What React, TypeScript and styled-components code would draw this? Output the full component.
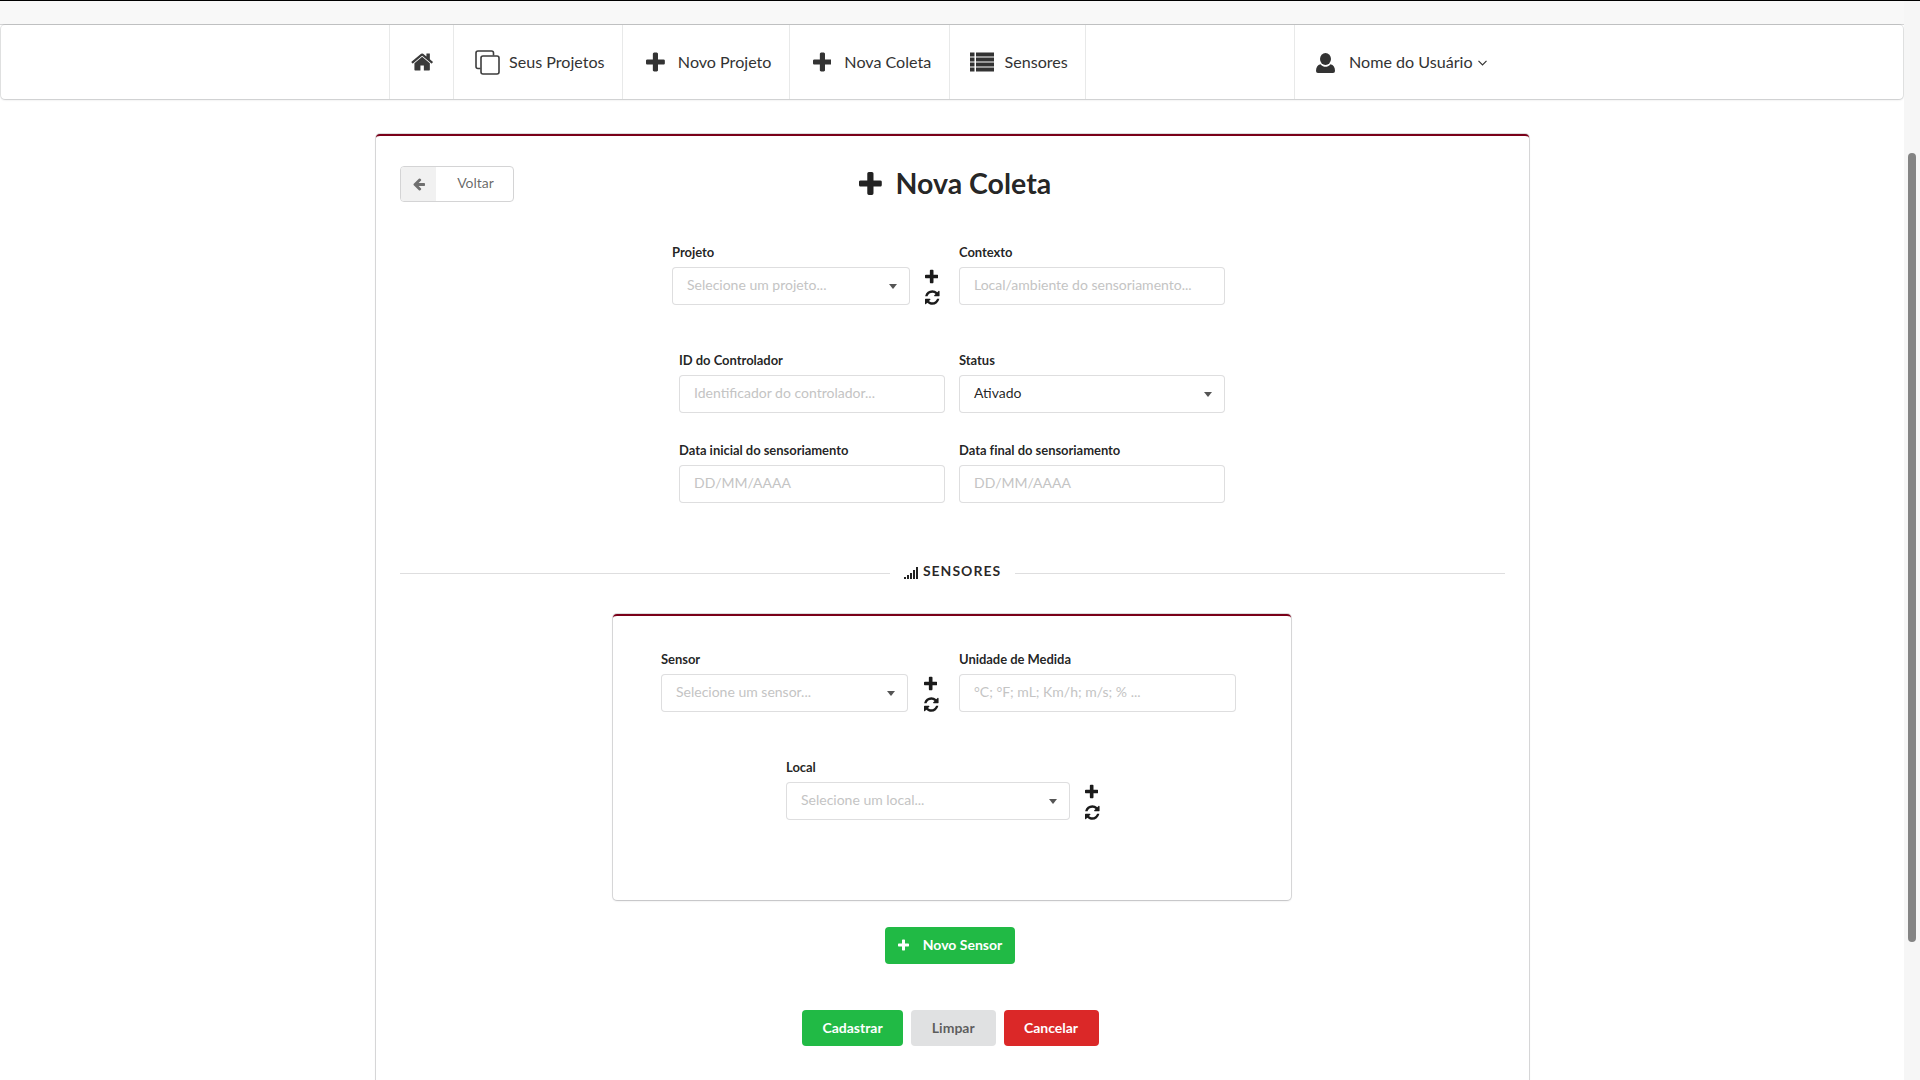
import React from 'react';
import styled, { createGlobalStyle } from 'styled-components';

const Global = createGlobalStyle`
  html, body { margin: 0; padding: 0; height: 100%; background: #fff; overflow: hidden; }
  * { box-sizing: border-box; }
  body { font-family: Lato, "Helvetica Neue", Arial, sans-serif; font-size: 14px; color: rgba(0,0,0,.87); }
`;

const PATHS = {
  plus: { vb: '0 0 1408 1792', d: 'M1408 800v192q0 40-28 68t-68 28h-416v416q0 40-28 68t-68 28h-192q-40 0-68-28t-28-68v-416h-416q-40 0-68-28t-28-68v-192q0-40 28-68t68-28h416v-416q0-40 28-68t68-28h192q40 0 68 28t28 68v416h416q40 0 68 28t28 68z' },
  home: { vb: '0 0 1664 1792', d: 'M1408 992v480q0 26-19 45t-45 19h-384v-384h-256v384h-384q-26 0-45-19t-19-45v-480q0-1 .5-3t.5-3l575-474 575 474q1 2 1 6zM1631 923l-62 74q-8 9-21 11h-3q-13 0-21-7l-692-577-692 577q-12 8-24 7-13-2-21-11l-62-74q-8-10-7-23.500t11-21.500l719-599q32-26 76-26t76 26l244 204v-195q0-14 9-23t23-9h192q14 0 23 9t9 23v408l219 182q10 8 11 21.500t-7 23.500z' },
  sync: { vb: '0 0 1536 1792', d: 'M1511 1056q0 5-1 7-64 268-268 434.500t-478 166.500q-146 0-282.500-55t-243.500-157l-129 129q-19 19-45 19t-45-19-19-45v-448q0-26 19-45t45-19h448q26 0 45 19t19 45-19 45l-137 137q71 66 161 102t187 36q134 0 250-65t186-179q11-17 53-117 8-23 30-23h192q13 0 22.500 9.500t9.500 22.500zM1536 256v448q0 26-19 45t-45 19h-448q-26 0-45-19t-19-45 19-45l138-138q-148-137-349-137-134 0-250 65t-186 179q-11 17-53 117-8 23-30 23h-199q-13 0-22.500-9.500t-9.500-22.500v-7q65-268 270-434.500t480-166.500q146 0 284 55.500t245 156.500l130-129q19-19 45-19t45 19 19 45z' },
  left: { vb: '0 0 1536 1792', d: 'M1536 896v128q0 53-32.500 90.500t-84.500 37.500h-704l293 294q38 36 38 90t-38 90l-75 76q-37 37-90 37-52 0-91-37l-651-652q-37-37-37-90 0-52 37-91l651-650q38-38 91-38 52 0 90 38l75 74q38 38 38 91t-38 91l-293 293h704q52 0 84.500 37.500t32.500 90.500z' },
};

const Icon = ({ name, size, color = 'currentColor' }: { name: keyof typeof PATHS; size: number; color?: string }) => {
  const p = PATHS[name];
  const [, , w, h] = p.vb.split(' ').map(Number);
  return (
    <svg width={(size * w) / h} height={size} viewBox={p.vb} fill={color} style={{ flex: 'none', display: 'block' }}>
      <path d={p.d} />
    </svg>
  );
};

const CopyIcon = () => (
  <svg width="25" height="25" viewBox="0 0 25 25" fill="none" stroke="#3d3d3d" strokeWidth="1.6" style={{ flex: 'none' }}>
    <path d="M5.5 18.5H3a2 2 0 0 1-2-2V3a2 2 0 0 1 2-2h13.500a2 2 0 0 1 2 2v2.500" />
    <rect x="6" y="6" width="18" height="18" rx="2" />
  </svg>
);

const ListIcon = () => (
  <svg width="24" height="20" viewBox="0 0 24 20" fill="#333" style={{ flex: 'none' }}>
    <rect x="0" y="0.500" width="4.500" height="4" /><rect x="6" y="0.500" width="18" height="4" />
    <rect x="0" y="5.500" width="4.500" height="4" /><rect x="6" y="5.500" width="18" height="4" />
    <rect x="0" y="10.500" width="4.500" height="4" /><rect x="6" y="10.500" width="18" height="4" />
    <rect x="0" y="15.500" width="4.500" height="4" /><rect x="6" y="15.500" width="18" height="4" />
  </svg>
);

const UserIcon = () => (
  <svg width="19" height="20" viewBox="0 0 19 20" fill="#333" style={{ flex: 'none', marginTop: 1 }}>
    <ellipse cx="9.500" cy="6" rx="5.500" ry="6" />
    <path d="M2 20 Q0 20 0 18 C0 14.500 1.500 11.800 4.500 11.200 C6 13 8 13.800 9.500 13.800 C11 13.800 13 13 14.500 11.200 C17.500 11.800 19 14.500 19 18 Q19 20 17 20 Z" />
  </svg>
);

const SignalIcon = () => (
  <svg width="14" height="12" viewBox="0 0 14 12" fill="#222" style={{ flex: 'none', marginTop: 3 }}>
    <rect x="0" y="10" width="2" height="2" /><rect x="3" y="8" width="2" height="4" />
    <rect x="6" y="6" width="2" height="6" /><rect x="9" y="3" width="2" height="9" />
    <rect x="12" y="0" width="2" height="12" />
  </svg>
);

const Chevron = styled.svg`
  flex: none;
  margin: 2px 0 0 -9px;
`;

const Screen = styled.div`
  display: flex;
  height: 1080px;
  width: 1920px;
  overflow: hidden;
  border-top: 1px solid #000;
`;
const Page = styled.div`
  flex: 1;
  min-width: 0;
  display: flex;
  flex-direction: column;
  overflow: hidden;
`;
const Strip = styled.div`
  height: 24px;
  flex: none;
  background: #f8f8f8;
  border-bottom: 1px solid #d4d4d5;
`;
const Nav = styled.nav`
  flex: none;
  height: 74px;
  margin: 0 1px 0 1px;
  padding-left: 388px;
  display: flex;
  background: #fff;
  border-radius: 4px;
  box-shadow: 0 1px 2px 0 rgba(34,36,38,.15), 0 0 0 1px rgba(34,36,38,.1);
`;
const NavItem = styled.a<{ $w: number; $pad: number; $gap: number }>`
  display: flex;
  align-items: center;
  width: ${p => p.$w}px;
  padding-left: ${p => p.$pad}px;
  gap: ${p => p.$gap}px;
  border-left: 1px solid rgba(34,36,38,.1);
  font-size: 16.1px;
  line-height: 20px;
  white-space: nowrap;
  color: #333;
`;
const NavEnd = styled.div`
  width: 209.5px;
  border-left: 1px solid rgba(34,36,38,.1);
`;
const Card = styled.main`
  flex: none;
  width: 1153px;
  height: 1100px;
  margin: 35px 0 0 376px;
  padding: 30px 24px 0;
  background: #fff;
  border-top: 2px solid #7a0019;
  border-radius: 4px;
  box-shadow: 0 1px 2px 0 rgba(34,36,38,.15), 0 0 0 1px rgba(34,36,38,.15);
`;
const HeadRow = styled.div`
  display: flex;
  align-items: center;
  height: 36px;
`;
const BackBtn = styled.button`
  display: flex;
  align-items: stretch;
  flex: none;
  width: 114px;
  height: 36px;
  padding: 0;
  background: #fff;
  border: 1px solid #d4d4d5;
  border-radius: 4px;
  font: 400 14px Lato, sans-serif;
  color: rgba(0,0,0,.6);
  overflow: hidden;
`;
const BackIcon = styled.span`
  width: 35px;
  background: #f1f1f1;
  display: flex;
  align-items: center;
  justify-content: center;
  color: #6f6f6f;
`;
const BackText = styled.span`
  flex: 1;
  align-self: center;
  text-align: center;
  padding-left: 2px;
  margin-top: -3px;
`;
const Title = styled.h1`
  flex: 1;
  margin: -2px 109px 0 0;
  display: flex;
  justify-content: center;
  align-items: center;
  gap: 14px;
  font: 700 28.5px/36px Lato, sans-serif;
  color: rgba(0,0,0,.87);
`;
const Row = styled.div<{ $left: number; $top: number; $gap?: number }>`
  display: flex;
  align-items: flex-start;
  padding-left: ${p => p.$left}px;
  margin-top: ${p => p.$top}px;
  gap: ${p => p.$gap ?? 0}px;
`;
const Field = styled.div<{ $w: number }>`
  width: ${p => p.$w}px;
  flex: none;
`;
const Label = styled.label`
  display: block;
  padding-top: 1px;
  font: 700 13px/17px Lato, sans-serif;
  letter-spacing: -0.04px;
  margin-bottom: 6px;
  color: rgba(0,0,0,.87);
`;
const Input = styled.input`
  display: block;
  width: 100%;
  height: 38px;
  padding: 0 14px 4px;
  background: #fff;
  border: 1px solid rgba(34,36,38,.15);
  border-radius: 4px;
  font: 400 14px Lato, sans-serif;
  color: rgba(0,0,0,.87);
  outline: none;
  &::placeholder { color: #c4c4c4; opacity: 1; }
`;
const Select = styled.div<{ $muted?: boolean }>`
  display: flex;
  align-items: center;
  justify-content: space-between;
  height: 38px;
  padding: 0 12px 4px 14px;
  border: 1px solid rgba(34,36,38,.15);
  border-radius: 4px;
  background: #fff;
  color: ${p => (p.$muted ? '#c4c4c4' : 'rgba(0,0,0,.87)')};
`;
const Caret = styled.i`
  width: 0;
  height: 0;
  margin-top: 4px;
  border-left: 4px solid transparent;
  border-right: 4px solid transparent;
  border-top: 5px solid #555;
`;
const Tools = styled.div<{ $w: number; $pad?: number }>`
  width: ${p => p.$w}px;
  height: 62px;
  flex: none;
  padding: 25px 0 0 ${p => p.$pad ?? 15}px;
  display: flex;
  flex-direction: column;
  gap: 4px;
  color: #1b1b1b;
`;
const Divider = styled.div`
  display: flex;
  align-items: center;
  margin-top: 54px;
  height: 30px;
  &::before, &::after {
    content: '';
    flex: 1;
    height: 1px;
    margin-top: 3px;
    background: rgba(34,36,38,.15);
  }
`;
const DividerText = styled.div`
  display: flex;
  align-items: center;
  gap: 5px;
  padding: 0 14px 2px;
  font: 700 14px/20px Lato, sans-serif;
  letter-spacing: 1px;
  color: rgba(0,0,0,.85);
`;
const Inner = styled.section`
  width: 678px;
  height: 286px;
  margin: 27px 0 0 213px;
  padding: 34px 0 0;
  border-top: 2px solid #7a0019;
  border-radius: 4px;
  box-shadow: 0 1px 2px 0 rgba(34,36,38,.15), 0 0 0 1px rgba(34,36,38,.15);
`;
const Center = styled.div<{ $top: number; $left: number }>`
  display: flex;
  gap: 8px;
  margin-top: ${p => p.$top}px;
  padding-left: ${p => p.$left}px;
`;
const Btn = styled.button<{ $bg: string; $fg?: string; $w: number; $h: number }>`
  display: flex;
  align-items: center;
  justify-content: center;
  gap: 14px;
  width: ${p => p.$w}px;
  height: ${p => p.$h}px;
  padding: 0 0 2px;
  border: 0;
  border-radius: 4px;
  background: ${p => p.$bg};
  color: ${p => p.$fg ?? '#fff'};
  font: 700 14px Lato, sans-serif;
`;
const ScrollTrack = styled.div`
  width: 16px;
  flex: none;
  padding: 152px 4px 0;
  background: #f6f6f6;
`;
const ScrollThumb = styled.div`
  height: 789px;
  border-radius: 4px;
  background: #848484;
`;

const ToolStack = ({ w, pad }: { w: number; pad?: number }) => (
  <Tools $w={w} $pad={pad}>
    <Icon name="plus" size={17} />
    <Icon name="sync" size={17} />
  </Tools>
);

export default function App() {
  return (
    <Screen>
      <Global />
      <Page>
        <Strip />
        <Nav>
          <NavItem $w={64} $pad={21} $gap={0}><Icon name="home" size={24} color="#3a3a3a" /></NavItem>
          <NavItem $w={169} $pad={21} $gap={9}><CopyIcon />Seus Projetos</NavItem>
          <NavItem $w={166.500} $pad={23} $gap={13}><Icon name="plus" size={24} color="#333" />Novo Projeto</NavItem>
          <NavItem $w={160} $pad={23} $gap={13}><Icon name="plus" size={24} color="#333" />Nova Coleta</NavItem>
          <NavItem $w={136} $pad={20} $gap={11}><ListIcon />Sensores</NavItem>
          <NavEnd />
          <NavItem $w={300} $pad={21} $gap={14}>
            <UserIcon />
            <span>Nome do Usuário</span>
            <Chevron width="9" height="6" viewBox="0 0 9 6" fill="none" stroke="#333" strokeWidth="1.2">
              <polyline points="0.5,0.8 4.5,4.8 8.5,0.8" />
            </Chevron>
          </NavItem>
        </Nav>
        <Card>
          <HeadRow>
            <BackBtn>
              <BackIcon><Icon name="left" size={14} /></BackIcon>
              <BackText>Voltar</BackText>
            </BackBtn>
            <Title><Icon name="plus" size={29} color="#222" />Nova Coleta</Title>
          </HeadRow>

          <Row $left={272} $top={41}>
            <Field $w={238}>
              <Label>Projeto</Label>
              <Select $muted>Selecione um projeto...<Caret /></Select>
            </Field>
            <ToolStack w={49} />
            <Field $w={265.500}>
              <Label>Contexto</Label>
              <Input placeholder="Local/ambiente do sensoriamento..." />
            </Field>
          </Row>

          <Row $left={279} $top={46} $gap={14}>
            <Field $w={266}>
              <Label>ID do Controlador</Label>
              <Input placeholder="Identificador do controlador..." />
            </Field>
            <Field $w={265.500}>
              <Label>Status</Label>
              <Select>Ativado<Caret /></Select>
            </Field>
          </Row>

          <Row $left={279} $top={28} $gap={14}>
            <Field $w={266}>
              <Label>Data inicial do sensoriamento</Label>
              <Input placeholder="DD/MM/AAAA" />
            </Field>
            <Field $w={265.500}>
              <Label>Data final do sensoriamento</Label>
              <Input placeholder="DD/MM/AAAA" />
            </Field>
          </Row>

          <Divider>
            <DividerText><SignalIcon />SENSORES</DividerText>
          </Divider>

          <Inner>
            <Row $left={48} $top={0}>
              <Field $w={247}>
                <Label>Sensor</Label>
                <Select $muted>Selecione um sensor...<Caret /></Select>
              </Field>
              <ToolStack w={51} pad={16} />
              <Field $w={277}>
                <Label>Unidade de Medida</Label>
                <Input placeholder="°C; °F; mL; Km/h; m/s; % ..." />
              </Field>
            </Row>
            <Row $left={173} $top={46}>
              <Field $w={284}>
                <Label>Local</Label>
                <Select $muted>Selecione um local...<Caret /></Select>
              </Field>
              <ToolStack w={40} />
            </Row>
          </Inner>

          <Center $top={27} $left={485}>
            <Btn $bg="#21ba45" $w={130} $h={37}><Icon name="plus" size={14} />Novo Sensor</Btn>
          </Center>
          <Center $top={46} $left={402}>
            <Btn $bg="#21ba45" $w={101} $h={36}>Cadastrar</Btn>
            <Btn $bg="#e0e1e2" $fg="rgba(0,0,0,.6)" $w={84.5} $h={36}>Limpar</Btn>
            <Btn $bg="#db2828" $w={95} $h={36}>Cancelar</Btn>
          </Center>
        </Card>
      </Page>
      <ScrollTrack><ScrollThumb /></ScrollTrack>
    </Screen>
  );
}
